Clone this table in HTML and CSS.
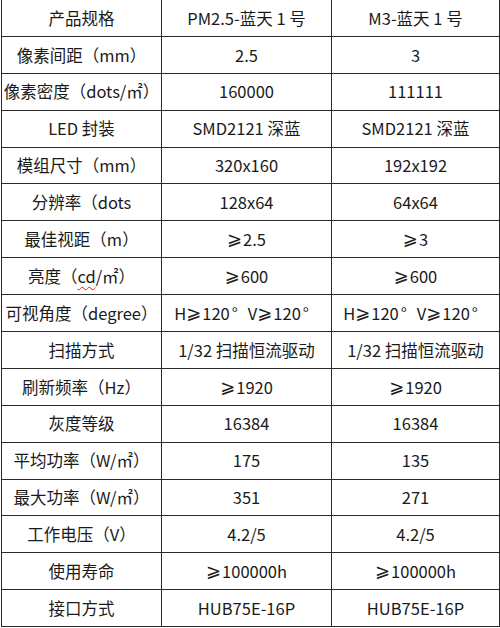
FILE: index.html
```html
<!DOCTYPE html>
<html lang="zh">
<head>
<meta charset="utf-8">
<title>产品规格</title>
<link rel="stylesheet" href="styles.css">
</head>
<body>
<div class="spec">
  <div class="c">产品规格</div><div class="c">PM2.5-蓝天 1 号</div><div class="c">M3-蓝天 1 号</div>
  <div class="c">像素间距（mm）</div><div class="c">2.5</div><div class="c">3</div>
  <div class="c">像素密度（dots/㎡）</div><div class="c">160000</div><div class="c">111111</div>
  <div class="c">LED 封装</div><div class="c">SMD2121 深蓝</div><div class="c">SMD2121 深蓝</div>
  <div class="c">模组尺寸（mm）</div><div class="c">320x160</div><div class="c">192x192</div>
  <div class="c">分辨率（dots</div><div class="c">128x64</div><div class="c">64x64</div>
  <div class="c">最佳视距（m）</div><div class="c"><span class="ge">⩾</span>2.5</div><div class="c"><span class="ge">⩾</span>3</div>
  <div class="c">亮度（<span class="typo">cd</span>/㎡）</div><div class="c"><span class="ge">⩾</span>600</div><div class="c"><span class="ge">⩾</span>600</div>
  <div class="c">可视角度（degree）</div><div class="c">H<span class="ge">⩾</span>120<span class="deg">°</span>V<span class="ge">⩾</span>120<span class="deg">°</span></div><div class="c">H<span class="ge">⩾</span>120<span class="deg">°</span>V<span class="ge">⩾</span>120<span class="deg">°</span></div>
  <div class="c">扫描方式</div><div class="c">1/32 扫描恒流驱动</div><div class="c">1/32 扫描恒流驱动</div>
  <div class="c">刷新频率（Hz）</div><div class="c"><span class="ge">⩾</span>1920</div><div class="c"><span class="ge">⩾</span>1920</div>
  <div class="c">灰度等级</div><div class="c">16384</div><div class="c">16384</div>
  <div class="c">平均功率（W/㎡）</div><div class="c">175</div><div class="c">135</div>
  <div class="c">最大功率（W/㎡）</div><div class="c">351</div><div class="c">271</div>
  <div class="c">工作电压（V）</div><div class="c">4.2/5</div><div class="c">4.2/5</div>
  <div class="c">使用寿命</div><div class="c"><span class="ge">⩾</span>100000h</div><div class="c"><span class="ge">⩾</span>100000h</div>
  <div class="c">接口方式</div><div class="c">HUB75E-16P</div><div class="c">HUB75E-16P</div>
</div>
</body>
</html>
```
FILE: styles.css
```css
html, body {
  margin: 0;
  padding: 0;
  background: #ffffff;
}
body {
  font-family: "Noto Sans CJK SC", "DejaVu Sans", sans-serif;
  font-size: 16.5px;
  color: #1a1a1a;
}
.spec {
  display: grid;
  grid-template-columns: 159px 169px 167px;
  grid-auto-rows: 35.9px;
  gap: 1px;
  padding: 1px;
  background: #2a2a2a;
  width: max-content;
  margin: -1px 0 0 1px;
}
.c {
  background: #ffffff;
  display: flex;
  align-items: center;
  justify-content: center;
  white-space: nowrap;
  line-height: 1;
}
.ge {
  font-family: "DejaVu Sans", sans-serif;
  font-size: 18px;
  margin-right: 1px;
}
.deg {
  display: inline-block;
  width: 16px;
  padding-left: 2px;
  text-align: left;
}
.typo {
  text-decoration: underline wavy #e02020;
  text-decoration-thickness: 1px;
  text-underline-offset: 3px;
}
```
